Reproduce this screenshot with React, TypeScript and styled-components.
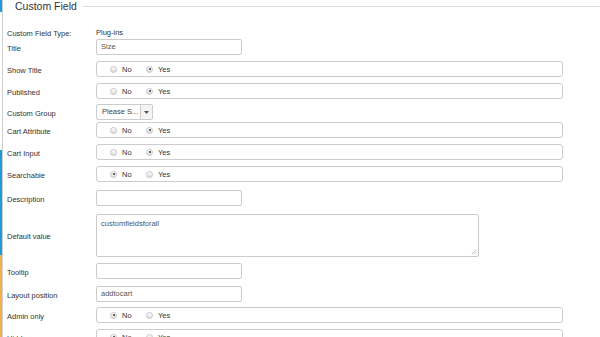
import { createGlobalStyle } from 'styled-components';
import styled from 'styled-components';

type Choice = 'No' | 'Yes';

interface FieldRow {
  label: string;
  kind: 'input' | 'radio' | 'select' | 'textarea';
  value?: string;
  checked?: Choice;
  space?: number;
}

const ROWS: FieldRow[] = [
  { label: 'Title', kind: 'input', value: 'Size', space: 2 },
  { label: 'Show Title', kind: 'radio', checked: 'Yes' },
  { label: 'Published', kind: 'radio', checked: 'Yes' },
  { label: 'Custom Group', kind: 'select', value: 'Please S...', space: 5 },
  { label: 'Cart Attribute', kind: 'radio', checked: 'Yes', space: 2 },
  { label: 'Cart Input', kind: 'radio', checked: 'Yes' },
  { label: 'Searchable', kind: 'radio', checked: 'No' },
  { label: 'Description', kind: 'input', value: '', space: 8 },
  { label: 'Default value', kind: 'textarea', value: 'customfieldsforall', space: 8 },
  { label: 'Tooltip', kind: 'input', value: '' },
  { label: 'Layout position', kind: 'input', value: 'addtocart', space: 7 },
  { label: 'Admin only', kind: 'radio', checked: 'No', space: 5 },
  { label: 'Hidden', kind: 'radio', checked: 'No' },
];

const SIDE_SEGMENTS = [
  { color: '#1f9bd7', height: 12 },
  { color: '#ffffff', height: 138 },
  { color: '#1f9bd7', height: 105 },
  { color: '#f3b04f', height: 200 },
];

const App = () => {
  return (
    <>
      <GlobalStyle />
      <Page>
        <SideStrip>
          {SIDE_SEGMENTS.map(({ color, height }, i) => (
            <SideSegment key={i} $color={color} $height={height} />
          ))}
        </SideStrip>
        <Content>
          <Legend>
            <LegendText>Custom Field</LegendText>
            <LegendLine />
          </Legend>
          <TypeRow>
            <Label>Custom Field Type:</Label>
            <PlainValue>Plug-ins</PlainValue>
          </TypeRow>
          {ROWS.map((row) => (
            <Row key={row.label} $space={row.space ?? 6}>
              <Label>{row.label}</Label>
              {row.kind === 'input' && <TextBox>{row.value}</TextBox>}
              {row.kind === 'textarea' && (
                <TextArea>
                  {row.value}
                  <Grip viewBox="0 0 8 8">
                    <path d="M7 2 L2 7 M7 5 L5 7" stroke="#999" strokeWidth="0.8" />
                  </Grip>
                </TextArea>
              )}
              {row.kind === 'select' && (
                <Select>
                  <SelectText>{row.value}</SelectText>
                  <SelectArrow>
                    <svg width="5" height="3" viewBox="0 0 5 3">
                      <path d="M0 0 H5 L2.5 3 Z" fill="#555" />
                    </svg>
                  </SelectArrow>
                </Select>
              )}
              {row.kind === 'radio' && (
                <RadioGroup>
                  {(['No', 'Yes'] as Choice[]).map((choice) => (
                    <RadioOption key={choice}>
                      <RadioDot $checked={row.checked === choice} />
                      {choice}
                    </RadioOption>
                  ))}
                </RadioGroup>
              )}
            </Row>
          ))}
        </Content>
      </Page>
    </>
  );
};

const GlobalStyle = createGlobalStyle`
  html, body {
    margin: 0;
    padding: 0;
    background: #ffffff;
    overflow: hidden;
  }

  body {
    font-family: 'Liberation Sans', Arial, sans-serif;
    color: #333333;
  }
`;

const Page = styled.div`
  display: flex;
  width: 600px;
  height: 337px;
  overflow: hidden;
`;

const SideStrip = styled.div`
  display: flex;
  flex-direction: column;
  width: 2px;
  flex-shrink: 0;
  border-right: 1px solid #cfcfcf;
`;

const SideSegment = styled.div<{ $color: string; $height: number }>`
  height: ${({ $height }) => $height}px;
  flex-shrink: 0;
  background: ${({ $color }) => $color};
`;

const Content = styled.div`
  flex: 1;
  padding-left: 4px;
  display: flex;
  flex-direction: column;
`;

const Legend = styled.div`
  display: flex;
  align-items: center;
  gap: 6px;
  height: 13px;
  padding-left: 8px;
`;

const LegendText = styled.span`
  font-size: 10.5px;
  line-height: 13px;
  color: #333333;
`;

const LegendLine = styled.div`
  flex: 1;
  height: 1px;
  background: #dddddd;
`;

const TypeRow = styled.div`
  display: grid;
  grid-template-columns: 89px 1fr;
  align-items: center;
  margin-top: 14px;
  height: 10px;
`;

const Row = styled.div<{ $space: number }>`
  display: grid;
  grid-template-columns: 89px 1fr;
  align-items: center;
  margin-top: ${({ $space }) => $space}px;
`;

const Label = styled.span`
  font-size: 7.5px;
  line-height: 9px;
  color: #333333;
  white-space: nowrap;
  padding-top: 2px;
`;

const PlainValue = styled.span`
  font-size: 7.5px;
  color: #333333;
`;

const TextBox = styled.div`
  box-sizing: border-box;
  width: 146px;
  height: 16px;
  border: 1px solid #cccccc;
  border-radius: 2px;
  padding: 0 4px;
  font-size: 7.5px;
  line-height: 14px;
  color: #555555;
`;

const TextArea = styled.div`
  position: relative;
  box-sizing: border-box;
  width: 383px;
  height: 43px;
  border: 1px solid #cccccc;
  border-radius: 2px;
  padding: 4px 4px;
  font-size: 7.5px;
  line-height: 9px;
  color: #555555;
`;

const Grip = styled.svg`
  position: absolute;
  right: 1px;
  bottom: 1px;
  width: 7px;
  height: 7px;
`;

const Select = styled.div`
  display: flex;
  box-sizing: border-box;
  width: 57px;
  height: 16px;
  border: 1px solid #cccccc;
  border-radius: 2px;
  background: #ffffff;
`;

const SelectText = styled.span`
  flex: 1;
  padding-left: 5px;
  font-size: 7.5px;
  line-height: 14px;
  color: #444444;
  white-space: nowrap;
  overflow: hidden;
`;

const SelectArrow = styled.span`
  display: flex;
  align-items: center;
  justify-content: center;
  width: 11px;
  border-left: 1px solid #cccccc;
  background: #f4f4f4;
`;

const RadioGroup = styled.div`
  display: flex;
  align-items: center;
  gap: 17px;
  box-sizing: border-box;
  width: 467px;
  height: 16px;
  border: 1px solid #cccccc;
  border-radius: 3px;
  padding-left: 13px;
`;

const RadioOption = styled.span`
  display: flex;
  align-items: center;
  gap: 5px;
  width: 19px;
  font-size: 7.5px;
  color: #333333;
`;

const RadioDot = styled.span<{ $checked: boolean }>`
  position: relative;
  box-sizing: border-box;
  width: 7px;
  height: 7px;
  border-radius: 50%;
  border: 1px solid #c4c4c4;
  background: linear-gradient(#ffffff, #dcdcdc);
  flex-shrink: 0;

  &::after {
    content: '';
    display: ${({ $checked }) => ($checked ? 'block' : 'none')};
    position: absolute;
    left: 1.5px;
    top: 1.5px;
    width: 2px;
    height: 2px;
    border-radius: 50%;
    background: #333333;
  }
`;

export default App;
